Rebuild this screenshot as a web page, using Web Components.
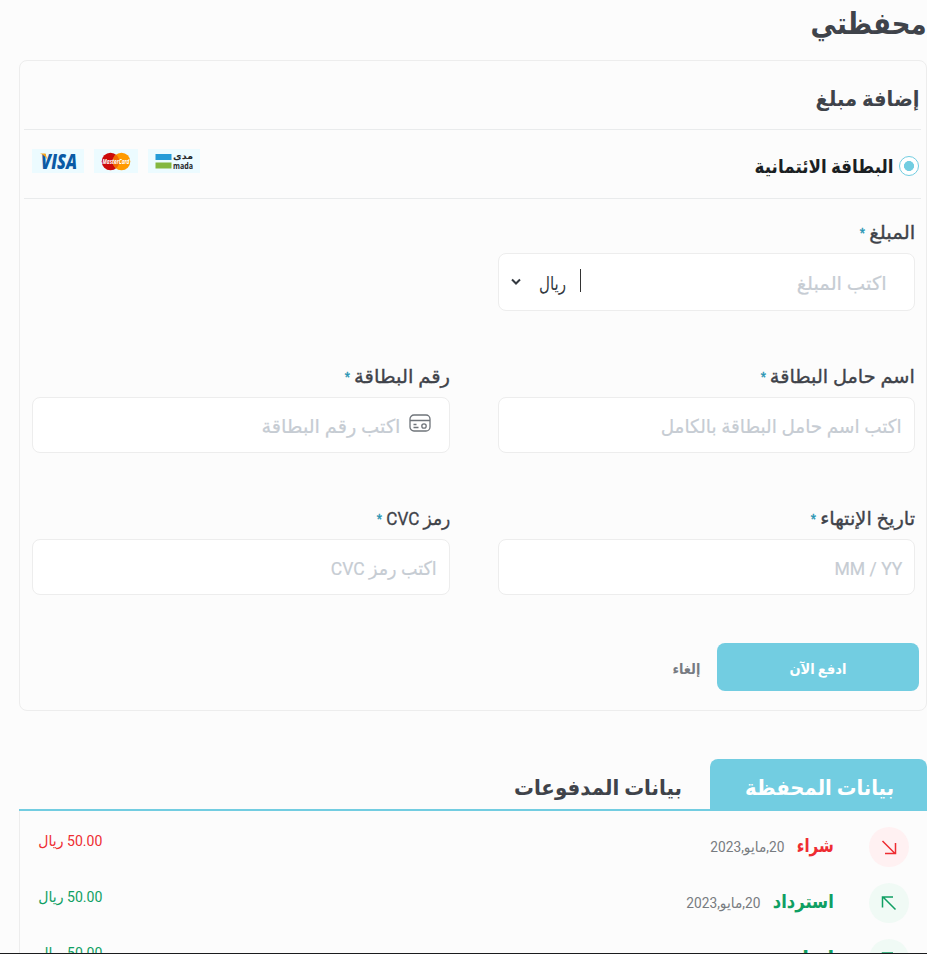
<!DOCTYPE html>
<html lang="ar" dir="rtl">
<head>
<meta charset="utf-8">
<title>محفظتي</title>
<style>
html,body{margin:0;height:954px;overflow:hidden;background:#fcfcfc}
body{font-family:Roboto,"DejaVu Sans",sans-serif;color:#3f434a}
</style>
</head>
<body>
<wallet-page></wallet-page>
<script>
const define = (name, html, init) => customElements.define(name, class extends HTMLElement {
  connectedCallback() {
    if (this.shadowRoot) return;
    this.attachShadow({ mode: 'open' }).innerHTML = typeof html === 'function' ? html(this) : html;
    if (init) init(this);
  }
});

/* One line of text, condensed or widened to the width in the w attribute. */
define('fit-text', e => `<style>
:host{display:block;flex:none;width:${e.getAttribute('w')}px;height:30px;line-height:30px;font-size:${e.getAttribute('s') || 19}px;white-space:nowrap}
span{display:inline-block;transform-origin:right center}
</style><span>${e.getAttribute('t')}</span>`, e => {
  const s = e.shadowRoot.querySelector('span');
  s.style.transform = `scaleX(${+e.getAttribute('w') / s.getBoundingClientRect().width})`;
});

define('pay-logos', `<style>
:host{display:flex;direction:ltr;gap:10px}
svg{display:block;background:#ecfbff;overflow:visible}
</style>
<svg width="52" height="24" viewBox="0 0 52 24"><text x="9" y="20" textLength="36" lengthAdjust="spacingAndGlyphs" font-family="Open Sans" font-weight="800" font-style="italic" font-size="21" fill="#0b5aa5">VISA</text><path d="M8 4.500h5.500l2 6.500Q13 6 8 4.500z" fill="#f8a51b"/></svg>
<svg width="44" height="24" viewBox="0 0 44 24"><circle cx="16.500" cy="12.500" r="8.800" fill="#cc0a0a"/><circle cx="27.500" cy="12.500" r="8.800" fill="#ff9a00"/><path d="M22 5.600a8.800 8.800 0 0 1 0 13.800a8.800 8.800 0 0 1 0-13.800z" fill="#f06a05"/><text x="8.500" y="15.200" textLength="27" lengthAdjust="spacingAndGlyphs" font-family="Open Sans" font-weight="700" font-style="italic" font-size="7" fill="#fff">MasterCard</text></svg>
<svg width="52" height="24" viewBox="0 0 52 24"><path d="M7.500 5h16v6h-16z" fill="#259bd7"/><path d="M7.500 13.500h16v6h-16z" fill="#84b740"/><text x="25" y="10" textLength="20" lengthAdjust="spacingAndGlyphs" font-family="DejaVu Sans" font-weight="700" font-size="9" fill="#24282b">مدى</text><text x="25" y="19.500" textLength="20" lengthAdjust="spacingAndGlyphs" font-family="Open Sans" font-weight="700" font-size="9.500" fill="#24282b">mada</text></svg>`);

define('form-field', e => `<style>
:host{display:block}
.label{display:flex;height:30px;gap:4px;-webkit-text-stroke:.35px currentColor}
.star{color:#2996b4;font-size:12px;line-height:30px}
.box{display:flex;align-items:center;box-sizing:border-box;height:${e.getAttribute('h') || 56}px;margin-top:5px;padding:4px ${e.getAttribute('pad') || 12}px 0;border:1px solid #ededed;border-radius:8px;background:#fff}
.ph{color:#c6ccd3;-webkit-text-stroke:.2px currentColor}
</style>
<div class="label"><fit-text t="${e.getAttribute('label')}" w="${e.getAttribute('lw')}"></fit-text><span class="star">*</span></div>
<div class="box"><slot name="icon"></slot><fit-text class="ph" t="${e.getAttribute('ph')}" w="${e.getAttribute('pw')}"></fit-text><slot></slot></div>`);

define('wallet-tab', `<style>
:host{display:flex;box-sizing:border-box;height:52px;align-items:center;padding-top:6px;font-weight:700}
:host([active]){width:217px;padding-right:33px;background:#72cde1;border-radius:8px 8px 0 0;color:#fff}
</style><slot></slot>`);

define('wallet-entry', e => {
  const out = e.hasAttribute('out');
  const color = out ? '#ee2d32' : '#0f9f63';
  return `<style>
:host{display:flex;align-items:flex-start;height:56px;padding:0 18px}
.icon{flex:none;display:flex;width:40px;height:40px;border-radius:50%;background:${out ? '#fff1f2' : '#f0faf5'}}
.name{margin:4px 35px 0 13px;color:${color};font-weight:700}
.date{margin-top:6px;color:#777b80}
.sum{margin:-1px auto 0 0;color:${color}}
</style>
<span class="icon"><svg width="40" height="40" fill="none" stroke="${color}" stroke-width="1.500"><path d="${out ? 'M13.500 14L26 26.500M16 26.500h10.500V16' : 'M26.500 26.500L14 14M24 14H13.500v10.500'}"/></svg></span>
<fit-text class="name" t="${e.getAttribute('name')}" w="${e.getAttribute('nw')}"></fit-text>
${e.hasAttribute('date') ? `<fit-text class="date" s="14.5" t="${e.getAttribute('date')}" w="74"></fit-text>` : ''}
<fit-text class="sum" s="15" t="50.00 ريال" w="64"></fit-text>`;
});

define('wallet-page', `<style>
:host{display:flex;flex-direction:column;box-sizing:border-box;width:927px;height:954px;padding-left:19px;border-bottom:1px solid #1b1c1e;overflow:hidden}
h1,h2{margin:0;font-weight:700}
h1{flex:none;padding-top:9px;height:51px}
.card{flex:none;box-sizing:border-box;height:651px;border:1px solid #ededed;border-radius:8px;padding:0 5px 0 4px}
.head{box-sizing:border-box;height:69px;border-bottom:1px solid #e9ebec;padding:23px 1px 0 0}
.method{display:flex;box-sizing:border-box;height:69px;border-bottom:1px solid #e9ebec;padding:19px 2px 0 8px;color:#1b1f23;font-weight:700}
.radio{width:18px;height:18px;margin:7px 0 0 5px;border:1px solid #72cde1;border-radius:50%;background:radial-gradient(circle,#72cde1 4.700px,#fff 5.300px)}
.method fit-text{margin-top:3px}
pay-logos{margin:0 auto 0 0}
.grid{display:grid;grid-template-columns:417px 418px;gap:0 48px;padding:19px 6px 0 0;grid-template-rows:144px 142px 139px}
.currency{display:flex;align-items:center;margin-right:auto;height:30px;color:#333940}
.currency i{width:1px;height:23px;background:#333;margin:0 0 8px 14px}
.currency svg{margin:0 17px 4px 0}
.actions{display:flex;align-items:center;gap:17px;padding-right:2px;font-weight:700}
button{display:flex;align-items:center;justify-content:center;width:202px;height:48px;padding:3px 0 0;border:0;border-radius:8px;background:#72cde1;color:#fff;font:inherit}
.cancel{color:#777b82;padding-top:3px}
nav{flex:none;display:flex;height:52px;margin-top:48px;gap:28px;background:linear-gradient(#72cde1,#72cde1) bottom/100% 2px no-repeat}
.rows{flex:none;padding-top:16px;border-left:1px solid #ededed}
</style>
<h1><fit-text s="30" t="محفظتي" w="116"></fit-text></h1>
<section class="card">
<h2 class="head"><fit-text s="21" t="إضافة مبلغ" w="104"></fit-text></h2>
<div class="method"><span class="radio"></span><fit-text t="البطاقة الائتمانية" w="139"></fit-text><pay-logos></pay-logos></div>
<div class="grid">
<form-field label="المبلغ" lw="46" ph="اكتب المبلغ" pw="90" h="58" pad="27">
<span class="currency" style="margin-left:-16px"><i></i><fit-text t="ريال" w="27"></fit-text><svg width="12" height="8" fill="none" stroke="#333940" stroke-width="2"><path d="M2 1.500l4 4 4-4"/></svg></span></form-field>
<span></span>
<form-field label="اسم حامل البطاقة" lw="145" ph="اكتب اسم حامل البطاقة بالكامل" pw="241"></form-field>
<form-field label="رقم البطاقة" lw="96" ph="اكتب رقم البطاقة" pw="139" pad="18">
<svg slot="icon" style="margin:0 0 9px 9px" width="22" height="18" fill="none" stroke="#6f747a" stroke-width="1.300"><rect x="1" y="1" width="20" height="16" rx="4"/><path d="M1 6.500h20M4.500 10.500h3M4.500 13.500h5"/><circle cx="15" cy="12" r="2.200"/></svg></form-field>
<form-field label="تاريخ الإنتهاء" lw="95" ph="MM / YY" pw="68"></form-field>
<form-field label="رمز CVC" lw="64" ph="اكتب رمز CVC" pw="106"></form-field>
</div>
<div class="actions"><button><fit-text s="14" t="ادفع الآن" w="57"></fit-text></button><fit-text class="cancel" s="14" t="إلغاء" w="28"></fit-text></div>
</section>
<nav><wallet-tab active><fit-text s="21" t="بيانات المحفظة" w="149"></fit-text></wallet-tab><wallet-tab><fit-text s="21" t="بيانات المدفوعات" w="168"></fit-text></wallet-tab></nav>
<div class="rows">
<wallet-entry out name="شراء" nw="37" date="20,مايو,2023"></wallet-entry>
<wallet-entry name="استرداد" nw="61" date="20,مايو,2023"></wallet-entry>
<wallet-entry name="إيداع" nw="45"></wallet-entry>
</div>`);
</script>
</body>
</html>
